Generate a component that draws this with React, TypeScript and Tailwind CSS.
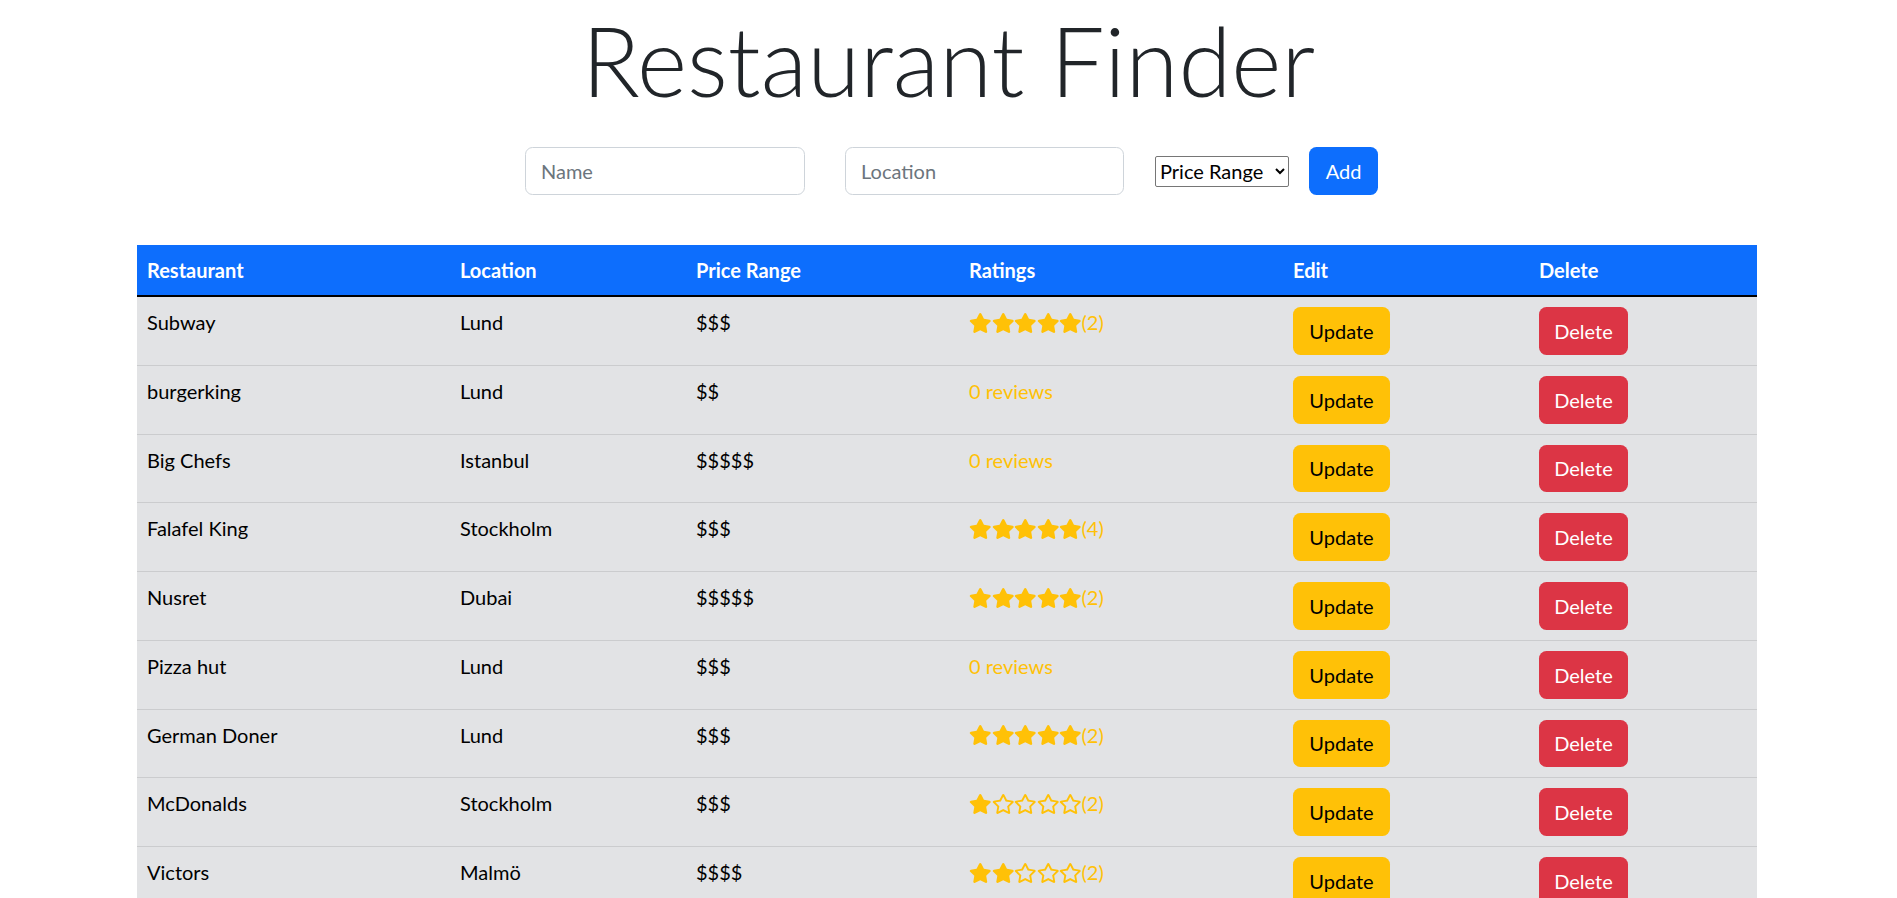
import React from "react";
import { FaStar, FaRegStar } from "react-icons/fa";

type Row = { name: string; location: string; price: number; rating: number | null; count: number };

const rows: Row[] = [
  { name: "Subway", location: "Lund", price: 3, rating: 5, count: 2 },
  { name: "burgerking", location: "Lund", price: 2, rating: null, count: 0 },
  { name: "Big Chefs", location: "Istanbul", price: 5, rating: null, count: 0 },
  { name: "Falafel King", location: "Stockholm", price: 3, rating: 5, count: 4 },
  { name: "Nusret", location: "Dubai", price: 5, rating: 5, count: 2 },
  { name: "Pizza hut", location: "Lund", price: 3, rating: null, count: 0 },
  { name: "German Doner", location: "Lund", price: 3, rating: 5, count: 2 },
  { name: "McDonalds", location: "Stockholm", price: 3, rating: 1, count: 2 },
  { name: "Victors", location: "Malmö", price: 4, rating: 2, count: 2 },
];

function Stars({ rating, count }: { rating: number | null; count: number }) {
  if (rating === null) {
    return <span className="text-[#ffc107]">0 reviews</span>;
  }
  const items = [];
  for (let i = 1; i <= 5; i++) {
    items.push(
      i <= rating ? (
        <FaStar key={i} className="inline-block w-[22.5px] h-[20px] align-[-0.125em] text-[#ffc107]" />
      ) : (
        <FaRegStar key={i} className="inline-block w-[22.5px] h-[20px] align-[-0.125em] text-[#ffc107]" />
      )
    );
  }
  return (
    <span className="text-[#ffc107]">
      {items}
      <span>({count})</span>
    </span>
  );
}

export default function App() {
  return (
    <div
      className="h-[898px] overflow-hidden bg-white text-[#212529] text-[20px] leading-[30px]"
      style={{ fontFamily: "Lato, 'Noto Sans', sans-serif" }}
    >
      <h1 className="text-center text-[96px] font-light leading-[120px] mb-[27px] text-[#212529]">
        Restaurant Finder
      </h1>

      <div className="flex items-center pl-[525px]">
        <input
          placeholder="Name"
          className="w-[280px] h-[48px] border border-[#ced4da] rounded-[7.5px] px-[15px] text-[20px] placeholder:text-[#6c757d] outline-none"
        />
        <input
          placeholder="Location"
          className="ml-[40px] w-[279px] h-[48px] border border-[#ced4da] rounded-[7.5px] px-[15px] text-[20px] placeholder:text-[#6c757d] outline-none"
        />
        <select className="ml-[31px] w-[134px] h-[31px] border border-[#767676] rounded-[2px] bg-white text-black text-[20px] leading-[26px]">
          <option>Price Range</option>
          <option>$</option>
          <option>$$</option>
          <option>$$$</option>
          <option>$$$$</option>
          <option>$$$$$</option>
        </select>
        <button className="ml-[20px] w-[69px] h-[48px] rounded-[7.5px] bg-[#0d6efd] text-white text-[20px]">
          Add
        </button>
      </div>

      <div className="mt-[50px] flex justify-start pl-[137px]">
        <table className="w-[1620px] table-fixed border-collapse text-left">
          <colgroup>
            <col className="w-[313px]" />
            <col className="w-[236px]" />
            <col className="w-[273px]" />
            <col className="w-[324px]" />
            <col className="w-[246px]" />
            <col className="w-[228px]" />
          </colgroup>
          <thead>
            <tr className="bg-[#0d6efd] text-white border-b-2 border-black">
              <th className="px-[10px] py-[10px] font-bold align-top">Restaurant</th>
              <th className="px-[10px] py-[10px] font-bold align-top">Location</th>
              <th className="px-[10px] py-[10px] font-bold align-top">Price Range</th>
              <th className="px-[10px] py-[10px] font-bold align-top">Ratings</th>
              <th className="px-[10px] py-[10px] font-bold align-top">Edit</th>
              <th className="px-[10px] py-[10px] font-bold align-top">Delete</th>
            </tr>
          </thead>
          <tbody>
            {rows.map((r) => (
              <tr key={r.name} className="bg-[#e2e3e5] text-black border-b border-[#cbccce]">
                <td className="px-[10px] py-[10px] align-top">{r.name}</td>
                <td className="px-[10px] py-[10px] align-top">{r.location}</td>
                <td className="px-[10px] py-[10px] align-top">{"$".repeat(r.price)}</td>
                <td className="px-[10px] py-[10px] align-top">
                  <Stars rating={r.rating} count={r.count} />
                </td>
                <td className="px-[10px] py-[10px] align-top">
                  <button className="block w-[97px] h-[47.75px] rounded-[7.5px] bg-[#ffc107] text-black text-[20px]">
                    Update
                  </button>
                </td>
                <td className="px-[10px] py-[10px] align-top">
                  <button className="block w-[89px] h-[47.75px] rounded-[7.5px] bg-[#dc3545] text-white text-[20px]">
                    Delete
                  </button>
                </td>
              </tr>
            ))}
          </tbody>
        </table>
      </div>
    </div>
  );
}
